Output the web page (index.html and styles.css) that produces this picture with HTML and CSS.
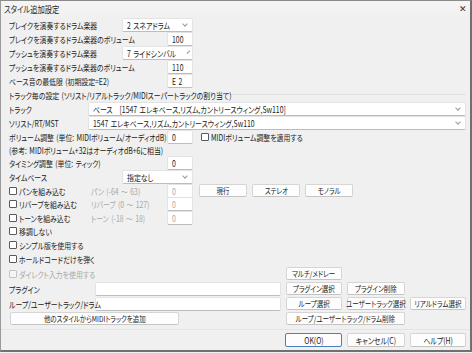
FILE: index.html
```html
<!DOCTYPE html>
<html>
<head>
    <meta charset="UTF-8">
    <title>スタイル追加設定</title>
    <link rel="stylesheet" href="styles.css">
</head>
<body>
    <div class="window">
        <div class="titlebar">
            <span class="title t">スタイル追加設定</span>
            <span class="close">✕</span>
        </div>

        <div class="content">
            <div class="row">
                <span class="label w-sel t">ブレイクを演奏するドラム楽器</span>
                <div class="select s-short"><span class="t">2 スネアドラム</span><i class="chev"></i></div>
            </div>
            <div class="row">
                <span class="label w-num t">ブレイクを演奏するドラム楽器のボリューム</span>
                <div class="input num"><span class="t">100</span></div>
            </div>
            <div class="row">
                <span class="label w-sel t">プッシュを演奏するドラム楽器</span>
                <div class="select s-short"><span class="t">7 ライドシンバル</span><i class="chev"></i></div>
            </div>
            <div class="row">
                <span class="label w-num t">プッシュを演奏するドラム楽器のボリューム</span>
                <div class="input num"><span class="t">110</span></div>
            </div>
            <div class="row">
                <span class="label w-num t">ベース音の最低限 (初期設定=E2)</span>
                <div class="input num"><span class="t">E 2</span></div>
            </div>

            <div class="row">
                <span class="label w-head t">トラック毎の設定 (ソリスト/リアルトラック/MIDIスーパートラックの割り当て)</span>
                <span class="rule"></span>
            </div>

            <div class="row">
                <span class="label w-track t">トラック</span>
                <div class="select s-wide"><span class="t">ベース　[1547 エレキベース,リズム,カントリースウィング,Sw110]</span><i class="chev"></i></div>
            </div>
            <div class="row">
                <span class="label w-track t">ソリスト/RT/MST</span>
                <div class="select s-wide"><span class="t">1547 エレキベース,リズム,カントリースウィング,Sw110</span><i class="chev"></i></div>
            </div>
            <div class="row short">
                <span class="label w-num t">ボリューム調整 (単位: MIDIボリューム/オーディオdB)</span>
                <div class="input num"><span class="t">0</span></div>
                <label class="check after-num"><i class="box"></i><span class="t">MIDIボリューム調整を適用する</span></label>
            </div>
            <div class="row short">
                <span class="label t">(参考: MIDIボリューム+32はオーディオdB+6に相当)</span>
            </div>
            <div class="row">
                <span class="label w-num t">タイミング調整 (単位: ティック)</span>
                <div class="input num"><span class="t">0</span></div>
            </div>
            <div class="row">
                <span class="label w-sel t">タイムベース</span>
                <div class="select s-short"><span class="t">指定なし</span><i class="chev"></i></div>
            </div>
            <div class="row short">
                <label class="check w-chk"><i class="box"></i><span class="t">パンを組み込む</span></label>
                <span class="label dim w-range t">パン (-64 ～ 63)</span>
                <div class="input num dim"><span class="t">0</span></div>
                <div class="btn-row pan">
                    <button class="btn b-pan"><span class="t c">現行</span></button>
                    <button class="btn b-pan"><span class="t c">ステレオ</span></button>
                    <button class="btn b-pan"><span class="t c">モノラル</span></button>
                </div>
            </div>
            <div class="row">
                <label class="check w-chk"><i class="box"></i><span class="t">リバーブを組み込む</span></label>
                <span class="label dim w-range t">リバーブ (0 ～ 127)</span>
                <div class="input num dim"><span class="t">0</span></div>
            </div>
            <div class="row short">
                <label class="check w-chk"><i class="box"></i><span class="t">トーンを組み込む</span></label>
                <span class="label dim w-range t">トーン (-18 ～ 18)</span>
                <div class="input num dim"><span class="t">0</span></div>
            </div>
            <div class="row">
                <label class="check"><i class="box"></i><span class="t">移調しない</span></label>
            </div>
            <div class="row">
                <label class="check"><i class="box"></i><span class="t">シンプル版を使用する</span></label>
            </div>
            <div class="row">
                <label class="check"><i class="box"></i><span class="t">ホールドコードだけを弾く</span></label>
            </div>
            <div class="row tall">
                <label class="check disabled w-left"><i class="box"></i><span class="t">ダイレクト入力を使用する</span></label>
                <button class="btn b-56"><span class="t c">マルチ/メドレー</span></button>
            </div>
            <div class="row tall">
                <span class="label w-file t">プラグイン</span>
                <div class="input file"></div>
                <div class="btn-row">
                    <button class="btn b-56"><span class="t c">プラグイン選択</span></button>
                    <button class="btn b-58"><span class="t c">プラグイン削除</span></button>
                </div>
            </div>
            <div class="row tall">
                <span class="label w-file t">ループ/ユーザートラック/ドラム</span>
                <div class="input file"></div>
                <div class="btn-row">
                    <button class="btn b-56"><span class="t c">ループ選択</span></button>
                    <button class="btn b-58"><span class="t c">ユーザートラック選択</span></button>
                    <button class="btn b-56"><span class="t c">リアルドラム選択</span></button>
                </div>
            </div>
            <div class="row tall">
                <button class="btn b-add"><span class="t c">他のスタイルからMIDIトラックを追加</span></button>
                <button class="btn b-del"><span class="t c">ループ/ユーザートラック/ドラム削除</span></button>
            </div>
        </div>

        <div class="footer">
            <button class="btn b-ok default"><span class="t c">OK(O)</span></button>
            <button class="btn b-58"><span class="t c">キャンセル(C)</span></button>
            <button class="btn b-56"><span class="t c">ヘルプ(H)</span></button>
        </div>
    </div>
</body>
</html>
```

FILE: styles.css
```css
body {
    margin: 0;
    background: #f0f0f0;
    font-family: "Noto Sans CJK JP", "Noto Sans", sans-serif;
    font-size: 8.5px;
    font-feature-settings: "palt";
    word-spacing: 1px;
    color: #1a1a1a;
}
/* narrow the text to the width of the original UI font */
.t {
    display: inline-block;
    white-space: nowrap;
    transform: scaleX(0.81);
    transform-origin: 0 50%;
}
.t.c {
    transform-origin: 50% 50%;
}
.window {
    width: 469px;
    height: 349px;
    border-top: 1px solid #8a8a8a;
    border-left: 1px solid #9a9a9a;
    border-right: 2px solid #707070;
    border-bottom: 2px solid #707070;
    background: #f0f0f0;
    display: flex;
    flex-direction: column;
}
.titlebar {
    height: 17px;
    display: flex;
    align-items: center;
    justify-content: space-between;
    padding: 0 3px 0 3px;
    background: linear-gradient(#f5f5f5, #f0f0f0);
}
.title {
    font-size: 9px;
    color: #222;
}
.close {
    font-size: 9px;
    color: #333;
    margin-top: -2px;
}
.content {
    padding: 0 4px 0 8px;
    display: flex;
    flex-direction: column;
}
.row {
    height: 14px;
    display: flex;
    align-items: center;
    white-space: nowrap;
}
.row.short {
    height: 13px;
}
.row.tall {
    height: 15px;
}
.label {
    flex: none;
}
.w-sel { width: 113px; }
.w-num { width: 158px; }
.w-track { width: 79px; }
.w-chk { width: 82px; }
.w-range { width: 76px; }
.w-file { width: 86px; }
.w-left { width: 277px; }
.w-head { width: 210px; }
.dim { color: #a8a8a8; }

.rule {
    flex: 1;
    height: 1px;
    background: #e2e2e2;
    margin-top: -1px;
}

.select, .input {
    box-sizing: border-box;
    height: 14px;
    background: #fff;
    border: 1px solid #e3e3e3;
    border-bottom-color: #bcbcbc;
    border-radius: 2px;
    display: flex;
    align-items: center;
    flex: none;
}
.select {
    padding: 0 4px 0 4px;
    justify-content: space-between;
}
.s-short { width: 71px; }
.s-wide { width: 378px; }
.chev {
    width: 3px;
    height: 3px;
    border-right: 1px solid #999;
    border-bottom: 1px solid #999;
    transform: rotate(45deg);
    margin-top: -2px;
    margin-right: 1px;
}
.num {
    width: 26px;
    padding-left: 4px;
}
.file {
    width: 186px;
}

.check {
    display: flex;
    align-items: center;
    flex: none;
}
.box {
    box-sizing: border-box;
    width: 8px;
    height: 8px;
    border: 1px solid #5a5a5a;
    border-radius: 1px;
    background: #fff;
    margin-right: 2px;
}
.after-num {
    margin-left: 8px;
}
.disabled {
    color: #a8a8a8;
}
.disabled .box {
    border-color: #c4c4c4;
    background: #f5f5f5;
}

.btn {
    box-sizing: border-box;
    height: 13px;
    padding: 0;
    font: inherit;
    font-size: 8px;
    color: #1a1a1a;
    background: #fdfdfd;
    border: 1px solid #d5d5d5;
    border-bottom-color: #c4c4c4;
    border-radius: 2px;
    flex: none;
    white-space: nowrap;
    display: flex;
    align-items: center;
    justify-content: center;
}
.btn-row {
    display: flex;
    gap: 5px;
    margin-left: 5px;
}
.btn-row.pan {
    margin-left: 6px;
}
.b-pan { width: 48px; }
.b-56 { width: 56px; }
.b-58 { width: 58px; }
.b-add {
    width: 169px;
    margin-left: 1px;
}
.b-del {
    width: 119px;
    margin-left: 107px;
}

.footer {
    margin-top: 3px;
    border-top: 1px solid #e4e4e4;
    padding: 3px 4px 0 0;
    display: flex;
    justify-content: flex-end;
    gap: 5px;
}
.footer .btn {
    height: 14px;
    font-size: 8.5px;
}
.b-ok {
    width: 57px;
}
.default {
    border: 1px solid #4a7ec0;
}
```
